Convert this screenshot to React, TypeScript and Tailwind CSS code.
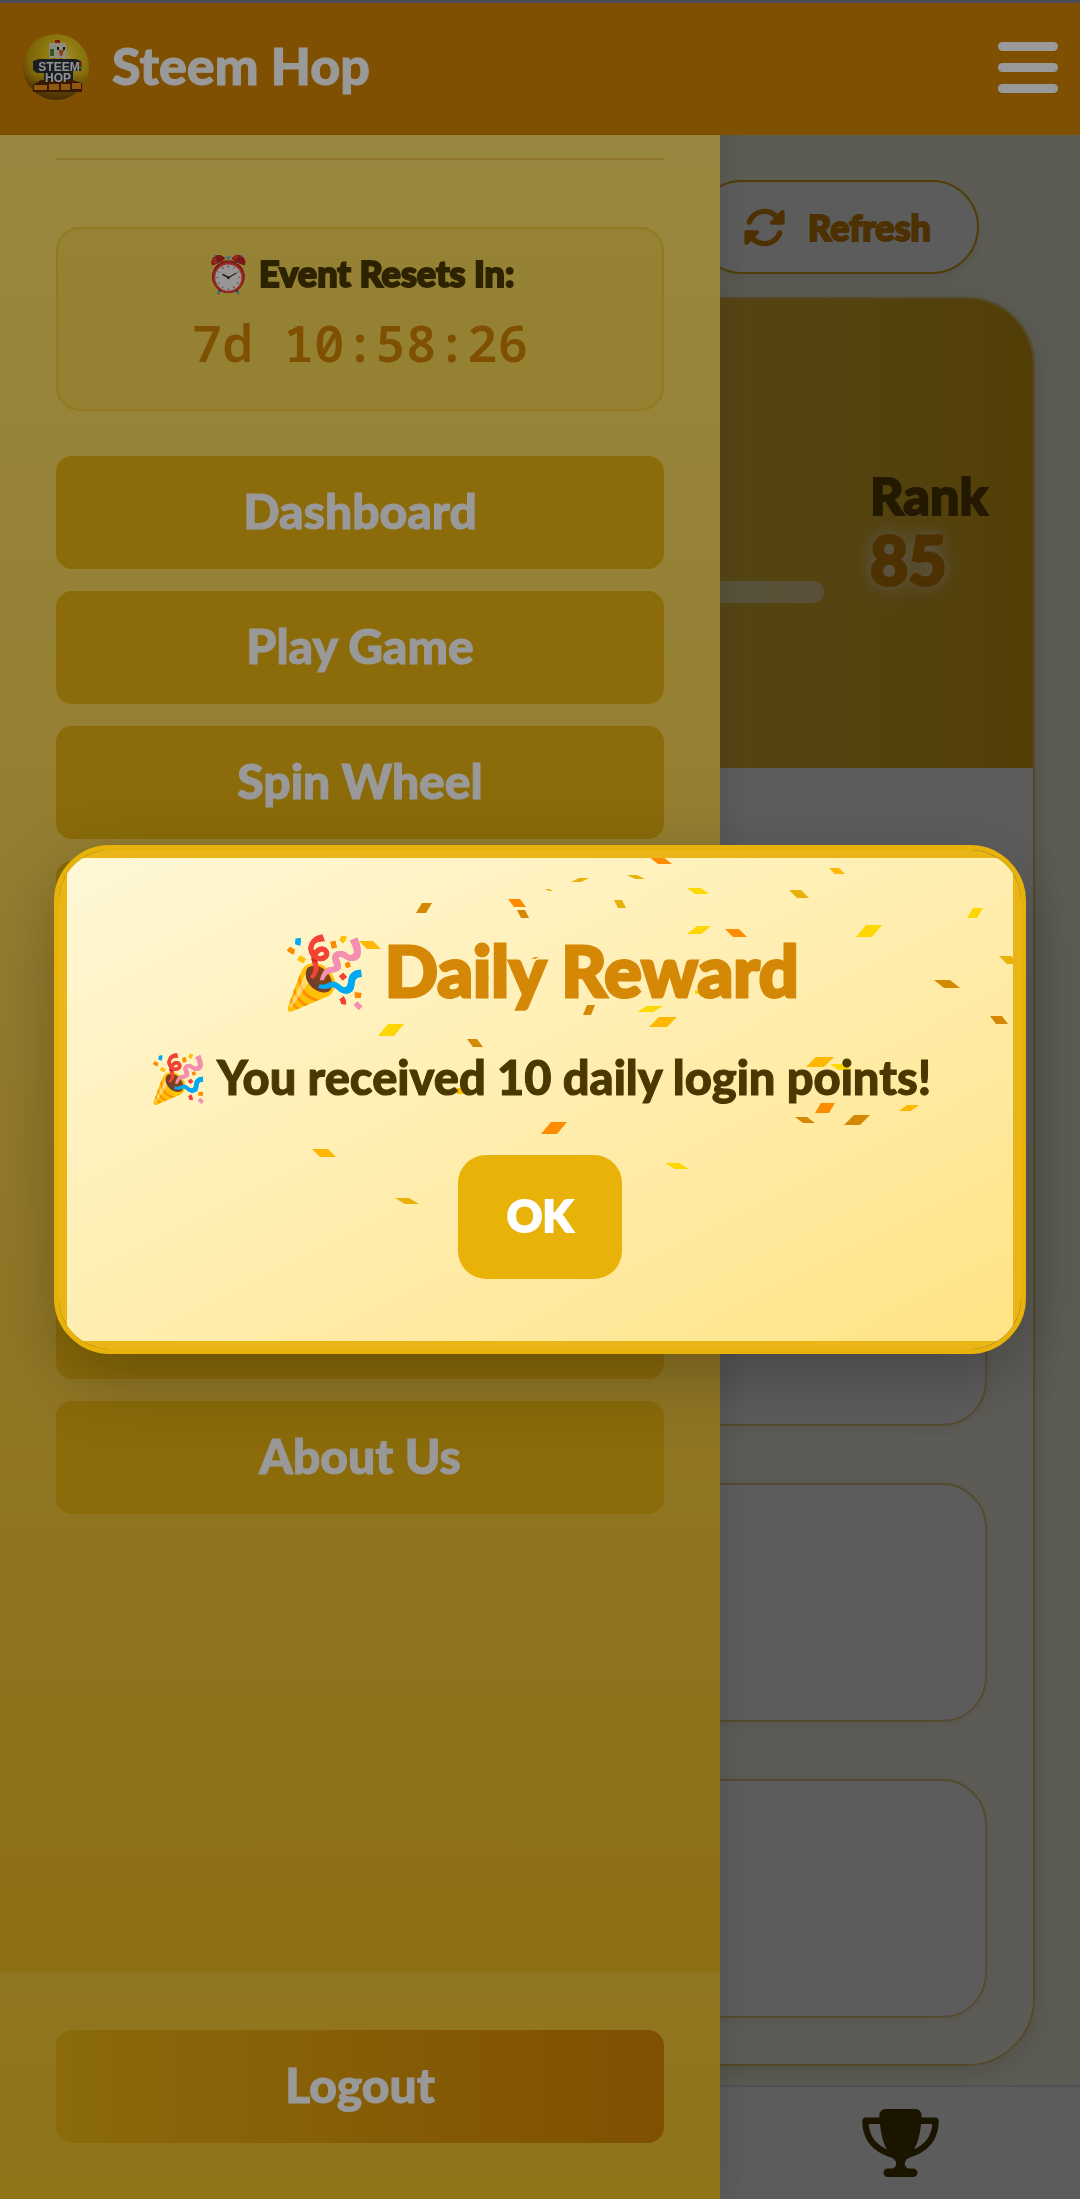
import { FaRotate, FaTrophy } from 'react-icons/fa6'

const menuItems = ['Dashboard', 'Play Game', 'Spin Wheel', '', '', '', '', 'About Us']

// x, y, half length, slant, half height, colour
type Flake = [number, number, number, number, number, string]

const confetti: Flake[] = [
  [357, 50, 5, 3, 5, '#D48806'],
  [450, 45, 6, -3, 4, '#FF8C00'],
  [456, 56, 4, -2, 4, '#D48806'],
  [482, 32, 2, -2, 1, '#E8B209'],
  [303, 87, 7, -4, 4, '#FFB700'],
  [418, 122, 3, 1, 4, '#FFD700'],
  [468, 100, 2, 2, 1, '#FF8C00'],
  [324, 172, 8, 5, 6, '#FFD700'],
  [408, 185, 5, -3, 4, '#D48806'],
  [394, 233, 4, 0, 3, '#FFB700'],
  [257, 295, 8, -4, 4, '#FFB700'],
  [340, 343, 7, -5, 3, '#E8B209'],
  [487, 270, 8, 5, 6, '#FF8C00'],
  [593, 2, 7, -5, 4, '#FF8C00'],
  [569, 19, 5, -4, 2, '#E8B209'],
  [513, 22, 5, 4, 2, '#E8B209'],
  [553, 46, 4, -2, 4, '#E8B209'],
  [631, 33, 7, -4, 3, '#FFD700'],
  [770, 13, 5, -3, 3, '#FFB700'],
  [732, 36, 6, -4, 4, '#E8B209'],
  [908, 55, 5, 3, 5, '#FFD700'],
  [802, 73, 8, 5, 6, '#FFD700'],
  [632, 72, 7, 5, 4, '#FFD700'],
  [669, 75, 7, -4, 4, '#FF8C00'],
  [942, 102, 6, -4, 4, '#E8B209'],
  [880, 126, 8, -5, 4, '#D48806'],
  [932, 162, 6, -3, 4, '#D48806'],
  [522, 152, 4, 2, 5, '#D48806'],
  [583, 151, 8, 5, 3, '#FFD700'],
  [596, 164, 9, 5, 5, '#FFB700'],
  [631, 134, 3, 0, 2, '#FFD700'],
  [753, 204, 9, 5, 5, '#FFB700'],
  [774, 209, 7, -4, 3, '#FFD700'],
  [758, 250, 7, 3, 5, '#FF8C00'],
  [738, 262, 6, -4, 3, '#D48806'],
  [790, 262, 8, 5, 5, '#D48806'],
  [842, 250, 6, 4, 3, '#FFB700'],
  [610, 308, 7, -5, 3, '#FFD700'],
]

function Confetti() {
  return (
    <svg
      className="absolute inset-0 size-full"
      viewBox="0 0 946 483"
      preserveAspectRatio="xMidYMin slice"
      aria-hidden="true"
    >
      {confetti.map(([x, y, a, s, h, fill]) => (
        <polygon
          key={`${x}-${y}`}
          fill={fill}
          points={`${x - a + s},${y - h} ${x + a + s},${y - h} ${x + a - s},${y + h} ${x - a - s},${y + h}`}
        />
      ))}
    </svg>
  )
}

function Logo() {
  return (
    <svg className="size-[67px]" viewBox="0 0 67 67" role="img" aria-label="Steem Hop logo">
      <defs>
        <radialGradient id="coin" cx="0.6" cy="0.35" r="0.65">
          <stop offset="0" stopColor="#fff07a" />
          <stop offset="0.35" stopColor="#f2cf1c" />
          <stop offset="0.8" stopColor="#d0a80f" />
          <stop offset="1" stopColor="#a87408" />
        </radialGradient>
        <linearGradient id="coinShade" x1="0" y1="0" x2="0" y2="1">
          <stop offset="0.6" stopColor="#7a4a08" stopOpacity="0" />
          <stop offset="1" stopColor="#7a4a08" stopOpacity="0.9" />
        </linearGradient>
      </defs>
      <circle cx="33" cy="33" r="33" fill="url(#coin)" />
      <circle cx="33" cy="33" r="33" fill="url(#coinShade)" />
      <path d="M32 6h5v4h-5z" fill="#d32a1c" />
      <rect x="26" y="9" width="17" height="15" rx="1" fill="#f1ead0" />
      <path d="M27 15h4v7h-4z" fill="#5b8c3a" />
      <path d="M34 13h2v3h-2zM40 13h2v3h-2z" fill="#222" />
      <path d="M36 16h5l-2 6h-2z" fill="#e8691c" />
      <path d="M30 24h2v3h-2zM37 24h2v3h-2z" fill="#e08a1c" />
      <path d="M10 27l6-2h37l5 2v10h-8v12H21V39h-7l-4-3z" fill="#2c3338" />
      <path d="M56 28h3v3h-3z" fill="#d33a22" />
      <path d="M56 32h3v3h-3z" fill="#63a03c" />
      <path d="M10 51l8-5h31l10 3v9H10z" fill="#5b2c08" />
      <path d="M11 51h13v5H11zM26 50h10v6H26zM38 50h9v6h-9zM49 49h9v6h-9z" fill="#f0921c" />
      <text
        x="36"
        y="37"
        textAnchor="middle"
        className="font-['Liberation_Sans',sans-serif] text-[12px] font-bold"
        fill="#f4f4f4"
      >
        STEEM
      </text>
      <text
        x="35"
        y="48"
        textAnchor="middle"
        className="font-['Liberation_Sans',sans-serif] text-[12px] font-bold"
        fill="#f4f4f4"
      >
        HOP
      </text>
    </svg>
  )
}

function Header() {
  return (
    <header className="fixed inset-x-0 top-0 z-30 flex h-[135px] items-center justify-between border-t-3 border-[#808093] bg-[#D48504] pb-1 pl-[23px] pr-[22px]">
      <div className="flex items-center gap-[22px]">
        <Logo />
        <h1 className="pb-1 text-[52px] leading-[64px] text-white [-webkit-text-stroke:1px_currentColor]">
          Steem Hop
        </h1>
      </div>
      <button type="button" aria-label="Toggle menu" className="flex flex-col gap-3">
        <span className="h-[9px] w-[60px] rounded-full bg-white" />
        <span className="h-[9px] w-[60px] rounded-full bg-white" />
        <span className="h-[9px] w-[60px] rounded-full bg-white" />
      </button>
    </header>
  )
}

function Dashboard() {
  return (
    <main className="px-[45px] pb-[133px] pt-[180px]">
      <div className="flex justify-end pr-14">
        <button
          type="button"
          className="flex h-[94px] items-center gap-[22px] rounded-full border-2 border-[#DDA813] bg-white px-[46px] text-[36px] text-[#D48806] shadow-[0_6px_12px_rgba(0,0,0,0.08)] [-webkit-text-stroke:2px_currentColor]"
        >
          <FaRotate className="size-[43px]" />
          Refresh
        </button>
      </div>

      <section className="mt-[23px] overflow-hidden rounded-[68px] border-2 border-[#E9C76A] bg-white shadow-[0_6px_30px_rgba(0,0,0,0.15)]">
        <div className="flex h-[469px] items-center gap-[46px] bg-linear-to-r from-[#FFE66D] to-[#E3AD12] px-[46px]">
          <div className="flex h-[138px] flex-1 flex-col justify-end">
            <div className="h-[22px] rounded-full bg-[#FFFBE8]/60" />
          </div>
          <div className="w-[117px] pb-2.5">
            <div className="text-[52px] leading-[62px] text-[#5E4600] [-webkit-text-stroke:2px_currentColor]">
              Rank
            </div>
            <div className="text-[66px] leading-[68px] text-[#D48806] [text-shadow:0_0_12px_rgba(255,255,255,0.6),0_0_24px_rgba(255,255,255,0.9)] [-webkit-text-stroke:3px_currentColor]">
              85
            </div>
          </div>
        </div>
        <div className="h-[373px]" />
        <div className="flex flex-col gap-[57px] bg-[#FFFCEB] p-[46px]">
          <div className="h-[239px] rounded-[45px] border-2 border-[#E9D085] bg-white shadow-[0_3px_12px_rgba(0,0,0,0.06)]" />
          <div className="h-[239px] rounded-[45px] border-2 border-[#E9D085] bg-white shadow-[0_3px_12px_rgba(0,0,0,0.06)]" />
          <div className="h-[239px] rounded-[45px] border-2 border-[#E9D085] bg-white shadow-[0_3px_12px_rgba(0,0,0,0.06)]" />
        </div>
      </section>
    </main>
  )
}

function BottomNav() {
  return (
    <nav className="fixed inset-x-0 bottom-0 grid h-[114px] grid-cols-3 items-center border-t-2 border-[#DCE2E8] bg-white">
      <a href="#leaderboard" aria-label="Leaderboard" className="col-start-3 flex justify-center">
        <FaTrophy className="h-[68px] w-[77px] text-[#4D3B00]" />
      </a>
    </nav>
  )
}

function Drawer() {
  return (
    <aside className="fixed inset-y-0 left-0 z-20 flex w-2/3 flex-col bg-linear-to-b from-[#FFE66D] to-[#EAB30E] pt-[158px] shadow-[0_0_36px_rgba(0,0,0,0.15)]">
      <div className="flex flex-1 flex-col px-14">
        <div className="border-t-2 border-[#D48806]/30" />

        <div className="mt-[67px] flex h-[184px] flex-col items-center gap-2.5 rounded-3xl border-2 border-[#E8B209]/40 bg-[#E8B209]/15 pt-5">
          <div className="text-[36px] leading-[48px] text-[#4D3B00] [-webkit-text-stroke:2px_currentColor]">
            ⏰ Event Resets In:
          </div>
          <div className="font-['Noto_Sans_Mono','DejaVu_Sans_Mono',monospace] text-[51px] font-semibold leading-[70px] text-[#D48504]">
            7d 10:58:26
          </div>
        </div>

        <nav className="mt-[45px] flex flex-col gap-[22px]">
          {menuItems.map((item, i) => (
            <button
              key={i}
              type="button"
              className="h-[113px] rounded-2xl bg-[#E8B212] pb-1 text-[48px] text-white [-webkit-text-stroke:1px_currentColor]"
            >
              {item}
            </button>
          ))}
        </nav>
      </div>

      <div className="border-t-2 border-[#E8B209]/30 bg-[#FFE66D]/30 px-14 pb-14 pt-14">
        <button
          type="button"
          className="h-[113px] w-full rounded-2xl bg-linear-to-r from-[#E8B212] to-[#D48504] pb-1 text-[48px] text-white [-webkit-text-stroke:1px_currentColor]"
        >
          Logout
        </button>
      </div>
    </aside>
  )
}

function RewardModal() {
  return (
    <div className="fixed inset-0 z-40 flex items-center justify-center bg-black/40">
      <div
        role="dialog"
        aria-labelledby="reward-title"
        className="w-9/10 overflow-hidden rounded-[56px] border-5 border-[#E8B209] shadow-[0_24px_72px_rgba(0,0,0,0.25)]"
      >
        <div className="border-8 border-[#EAB516]">
          <div className="relative bg-linear-to-br from-[#FFF8D6] to-[#FFE385] pb-[62px] pt-[62px] text-center">
            <Confetti />
            <div className="relative flex flex-col items-center">
              <h2
                id="reward-title"
                className="text-[70px] leading-[100px] text-[#D48806] [-webkit-text-stroke:3px_currentColor]"
              >
                🎉 Daily Reward
              </h2>
              <p className="mt-[23px] text-[47px] leading-[68px] text-[#4A3800] [-webkit-text-stroke:1px_currentColor]">
                🎉 You received 10 daily login points!
              </p>
              <button
                type="button"
                className="mt-11 h-[124px] w-[164px] rounded-[28px] bg-[#E8B209] pb-1 text-[44px] text-white [-webkit-text-stroke:2px_currentColor]"
              >
                OK
              </button>
            </div>
          </div>
        </div>
      </div>
    </div>
  )
}

export default function App() {
  return (
    <div className="min-h-screen bg-[#FFFFE9] font-['Lato',sans-serif] font-black">
      <Header />
      <Dashboard />
      <BottomNav />
      <div className="fixed inset-0 z-10 bg-black/40" />
      <Drawer />
      <RewardModal />
    </div>
  )
}
